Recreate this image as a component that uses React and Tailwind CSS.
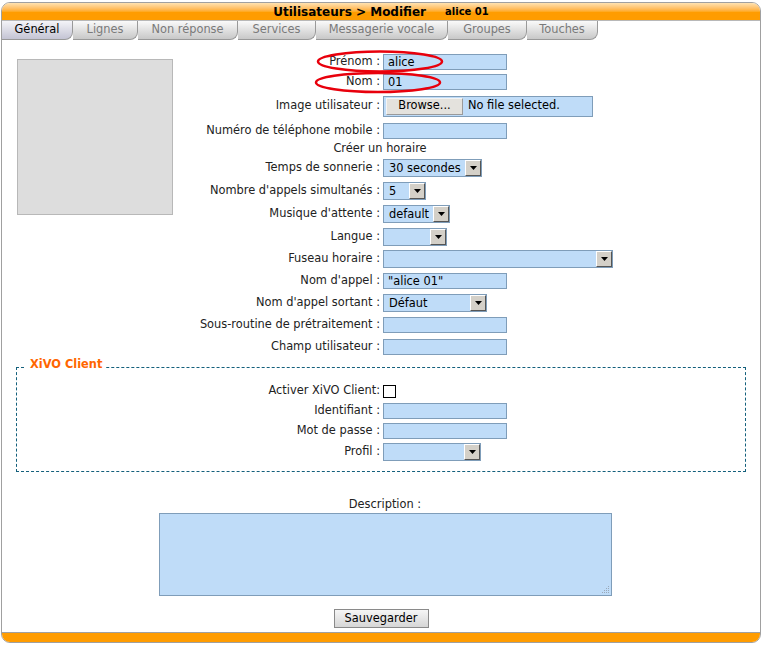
import React from "react";

const tabs = [
  { label: "Général", w: "w-[71px]", active: true },
  { label: "Lignes", w: "w-[65px]" },
  { label: "Non réponse", w: "w-[100px]" },
  { label: "Services", w: "w-[78px]" },
  { label: "Messagerie vocale", w: "w-[132px]" },
  { label: "Groupes", w: "w-[79px]" },
  { label: "Touches", w: "w-[71px]" },
];

function TextInput({ className = "w-[124px]", value }) {
  return (
    <div className={`h-[16px] border border-[#7f9db9] bg-[#bfdcf8] pl-[4px] leading-[14px] text-black ${className}`}>
      {value}
    </div>
  );
}

function Select({ className, value }) {
  return (
    <div className={`flex h-[18px] border border-[#7f9db9] bg-[#bfdcf8] ${className}`}>
      <span className="flex-1 pl-[5px] leading-[16px] text-black">{value}</span>
      <span className="w-[16px] h-[16px] flex items-center justify-center bg-[#d4d0c8] border border-t-white border-l-white border-r-[#555] border-b-[#555]">
        <svg width="7" height="4" viewBox="0 0 7 4">
          <polygon points="0,0 7,0 3.5,4" fill="#000" />
        </svg>
      </span>
    </div>
  );
}

function Row({ h, label, children }) {
  return (
    <div className={`flex items-center ${h}`}>
      <div className="w-[207px] text-right text-[#222] whitespace-nowrap">{label}</div>
      <div className="ml-[3px]">{children}</div>
    </div>
  );
}

function ClientRow({ h, label, children }) {
  return (
    <div className={`flex items-center ${h}`}>
      <div className="w-[363px] text-right text-[#222] whitespace-nowrap">{label}</div>
      <div className="ml-[3px]">{children}</div>
    </div>
  );
}

export default function App() {
  return (
    <div className="relative w-[762px] h-[645px] bg-white text-[11.4px] font-['DejaVu_Sans','Verdana',sans-serif]">
      <div className="ml-[1px] mt-[2px] w-[760px] h-[641px] border border-[#a0a0a0] rounded-[9px] overflow-hidden flex flex-col">
        {/* Titre */}
        <div className="h-[17px] flex items-center justify-center bg-linear-to-b from-[#ffe2b0] via-[#ffab25] via-50% to-[#ff9c00] to-55%">
          <span className="font-bold text-[12px] text-black">Utilisateurs &gt; Modifier</span>
          <span className="ml-[19px] font-bold text-[10px] text-black">alice 01</span>
        </div>

        {/* Onglets */}
        <div className="h-[20px] flex border-t border-[#b8b8b8]">
          {tabs.map((t) => (
            <div
              key={t.label}
              className={`${t.w} h-[19px] flex items-center justify-center rounded-br-[8px] border-r border-b border-[#999] ${
                t.active
                  ? "bg-linear-to-b from-[#f4f4f8] to-[#c4c4d4] text-black"
                  : "bg-linear-to-b from-[#fafafa] to-[#c8c8c8] text-[#7a7a7a]"
              }`}
            >
              {t.label}
            </div>
          ))}
        </div>

        {/* Contenu */}
        <div className="flex-1 flex flex-col">
          <div className="flex pt-[12px]">
            <div className="ml-[15px] mt-[7px] w-[156px] h-[156px] shrink-0 bg-[#dddddd] border border-[#b8b8b8]" />
            <div className="flex flex-col">
              <Row h="h-[20px]" label="Prénom :">
                <TextInput value="alice" />
              </Row>
              <Row h="h-[20px]" label="Nom :">
                <TextInput value="01" />
              </Row>
              <Row h="h-[28px]" label="Image utilisateur :">
                <div className="w-[210px] h-[21px] border border-[#7f9db9] bg-[#bfdcf8] flex items-center">
                  <div className="ml-[2px] w-[77px] h-[17px] flex items-center justify-center bg-[#e4e2dd] border border-[#9a9a9a] border-t-[#f4f4f4] border-l-[#f4f4f4] text-black">
                    Browse...
                  </div>
                  <span className="ml-[5px] text-black">No file selected.</span>
                </div>
              </Row>
              <Row h="h-[22px]" label="Numéro de téléphone mobile :">
                <TextInput />
              </Row>
              <div className="h-[14px] w-[414px] flex items-center justify-center text-[#222]">Créer un horaire</div>
              <Row h="h-[23px]" label="Temps de sonnerie :">
                <Select className="w-[99px]" value="30 secondes" />
              </Row>
              <Row h="h-[23px]" label="Nombre d'appels simultanés :">
                <Select className="w-[43px]" value="5" />
              </Row>
              <Row h="h-[23px]" label="Musique d'attente :">
                <Select className="w-[67px]" value="default" />
              </Row>
              <Row h="h-[23px]" label="Langue :">
                <Select className="w-[64px]" value="" />
              </Row>
              <Row h="h-[22px]" label="Fuseau horaire :">
                <Select className="w-[230px]" value="" />
              </Row>
              <Row h="h-[22px]" label="Nom d'appel :">
                <TextInput value={'"alice 01"'} />
              </Row>
              <Row h="h-[22px]" label="Nom d'appel sortant :">
                <Select className="w-[104px]" value="Défaut" />
              </Row>
              <Row h="h-[22px]" label="Sous-routine de prétraitement :">
                <TextInput />
              </Row>
              <Row h="h-[22px]" label="Champ utilisateur :">
                <TextInput />
              </Row>
            </div>
          </div>

          {/* XiVO Client */}
          <fieldset className="ml-[14px] w-[730px] border border-dashed border-[#14607c] pb-[8px]">
            <legend className="ml-[9px] px-[4px] pb-[6px] font-bold text-[#ff6600] leading-[13px]">XiVO Client</legend>
            <div className="flex flex-col pt-[4px]">
              <ClientRow h="h-[20px]" label="Activer XiVO Client:">
                <div className="w-[13px] h-[13px] border border-black bg-white" />
              </ClientRow>
              <ClientRow h="h-[20px]" label="Identifiant :">
                <TextInput />
              </ClientRow>
              <ClientRow h="h-[20px]" label="Mot de passe :">
                <TextInput />
              </ClientRow>
              <ClientRow h="h-[22px]" label="Profil :">
                <Select className="w-[98px]" value="" />
              </ClientRow>
            </div>
          </fieldset>

          {/* Description */}
          <div className="flex flex-col items-center mt-[25px]">
            <div className="ml-[8px] text-[#222] leading-[14px]">Description :</div>
            <div className="relative ml-[8px] mt-[2px] w-[453px] h-[83px] border border-[#7f9db9] bg-[#bfdcf8]">
              <svg className="absolute right-[1px] bottom-[1px]" width="10" height="10" viewBox="0 0 10 10">
                {[[8, 2], [6, 4], [8, 4], [4, 6], [6, 6], [8, 6], [2, 8], [4, 8], [6, 8], [8, 8]].map(([x, y]) => (
                  <rect key={`${x}-${y}`} x={x} y={y} width="1" height="1" fill="#9aa8b8" />
                ))}
              </svg>
            </div>
            <div className="mt-[13px] w-[95px] h-[19px] flex items-center justify-center border border-[#8a8a8a] bg-linear-to-b from-[#f6f6f6] to-[#d6d6d6] text-black">
              Sauvegarder
            </div>
          </div>
        </div>

        {/* Pied */}
        <div className="h-[10px] border-t border-[#a0a0a0] bg-[#ff9c00]" />
      </div>

      {/* Annotations */}
      <svg className="absolute left-0 top-0 pointer-events-none" width="762" height="645">
        <ellipse cx="380" cy="59.5" rx="62" ry="10" fill="none" stroke="#e8000c" strokeWidth="2.5" />
        <ellipse cx="378" cy="80.5" rx="62" ry="9.5" fill="none" stroke="#e8000c" strokeWidth="2.5" />
      </svg>
    </div>
  );
}
